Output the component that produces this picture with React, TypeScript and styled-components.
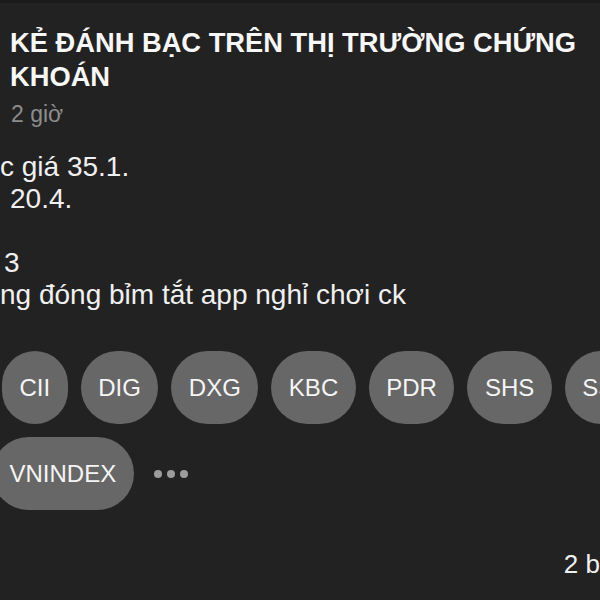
import React from 'react';
import styled, { createGlobalStyle } from 'styled-components';

const GlobalStyle = createGlobalStyle`
  html, body {
    margin: 0;
    padding: 0;
    background: #222222;
  }
  * {
    box-sizing: border-box;
  }
`;

const Page = styled.div`
  width: 600px;
  height: 600px;
  overflow: hidden;
  background: #222222;
  border-top: 3px solid #1b1b1b;
  font-family: "Liberation Sans", Arial, sans-serif;
  color: #f2f2f2;
`;

const Title = styled.h1`
  margin: 23px 0 0;
  padding: 0 10px;
  font-size: 27.3px;
  line-height: 34px;
  font-weight: 700;
  color: #f7f7f7;
`;

const Meta = styled.div`
  margin-top: 6px;
  padding-left: 11px;
  font-size: 23px;
  line-height: 28px;
  color: #8c8c8c;
`;

const Body = styled.div`
  margin-top: 23px;
  font-size: 28px;
  line-height: 32px;
  color: #f0f0f0;
  white-space: nowrap;
`;

const Line = styled.div<{ $indent?: number }>`
  height: 32px;
  padding-left: ${({ $indent }) => $indent ?? 0}px;
`;

const Tags = styled.div`
  margin-top: 40px;
`;

const TagRow = styled.div<{ $offset: number; $gapTop?: number }>`
  display: flex;
  align-items: center;
  gap: 13px;
  margin-top: ${({ $gapTop }) => $gapTop ?? 0}px;
  margin-left: ${({ $offset }) => $offset}px;
  flex-wrap: nowrap;
`;

const Pill = styled.span`
  flex-shrink: 0;
  display: inline-flex;
  align-items: center;
  justify-content: center;
  height: 73px;
  padding: 0 17.5px;
  border-radius: 36.5px;
  background: #676767;
  color: #f5f5f5;
  font-size: 24px;
`;

const More = styled.div`
  display: flex;
  gap: 5px;
  margin-left: 7px;
`;

const Dot = styled.span`
  width: 8px;
  height: 8px;
  border-radius: 50%;
  background: #9c9c9c;
`;

const Footer = styled.div`
  margin-top: 39px;
  text-align: right;
  font-size: 26px;
  line-height: 30px;
  color: #f0f0f0;
  white-space: nowrap;
`;

const firstRow = ['CII', 'DIG', 'DXG', 'KBC', 'PDR', 'SHS', 'SSI'];

export default function App() {
  return (
    <Page>
      <GlobalStyle />
      <Title>KẺ ĐÁNH BẠC TRÊN THỊ TRƯỜNG CHỨNG KHOÁN</Title>
      <Meta>2 giờ</Meta>
      <Body>
        <Line>c giá 35.1.</Line>
        <Line $indent={10}>20.4.</Line>
        <Line />
        <Line $indent={4}>3</Line>
        <Line>ng đóng bỉm tắt app nghỉ chơi ck</Line>
      </Body>
      <Tags>
        <TagRow $offset={2}>
          {firstRow.map((tag) => (
            <Pill key={tag}>{tag}</Pill>
          ))}
        </TagRow>
        <TagRow $offset={-8} $gapTop={13}>
          <Pill>VNINDEX</Pill>
          <More>
            <Dot />
            <Dot />
            <Dot />
          </More>
        </TagRow>
      </Tags>
      <Footer>2 b</Footer>
    </Page>
  );
}
